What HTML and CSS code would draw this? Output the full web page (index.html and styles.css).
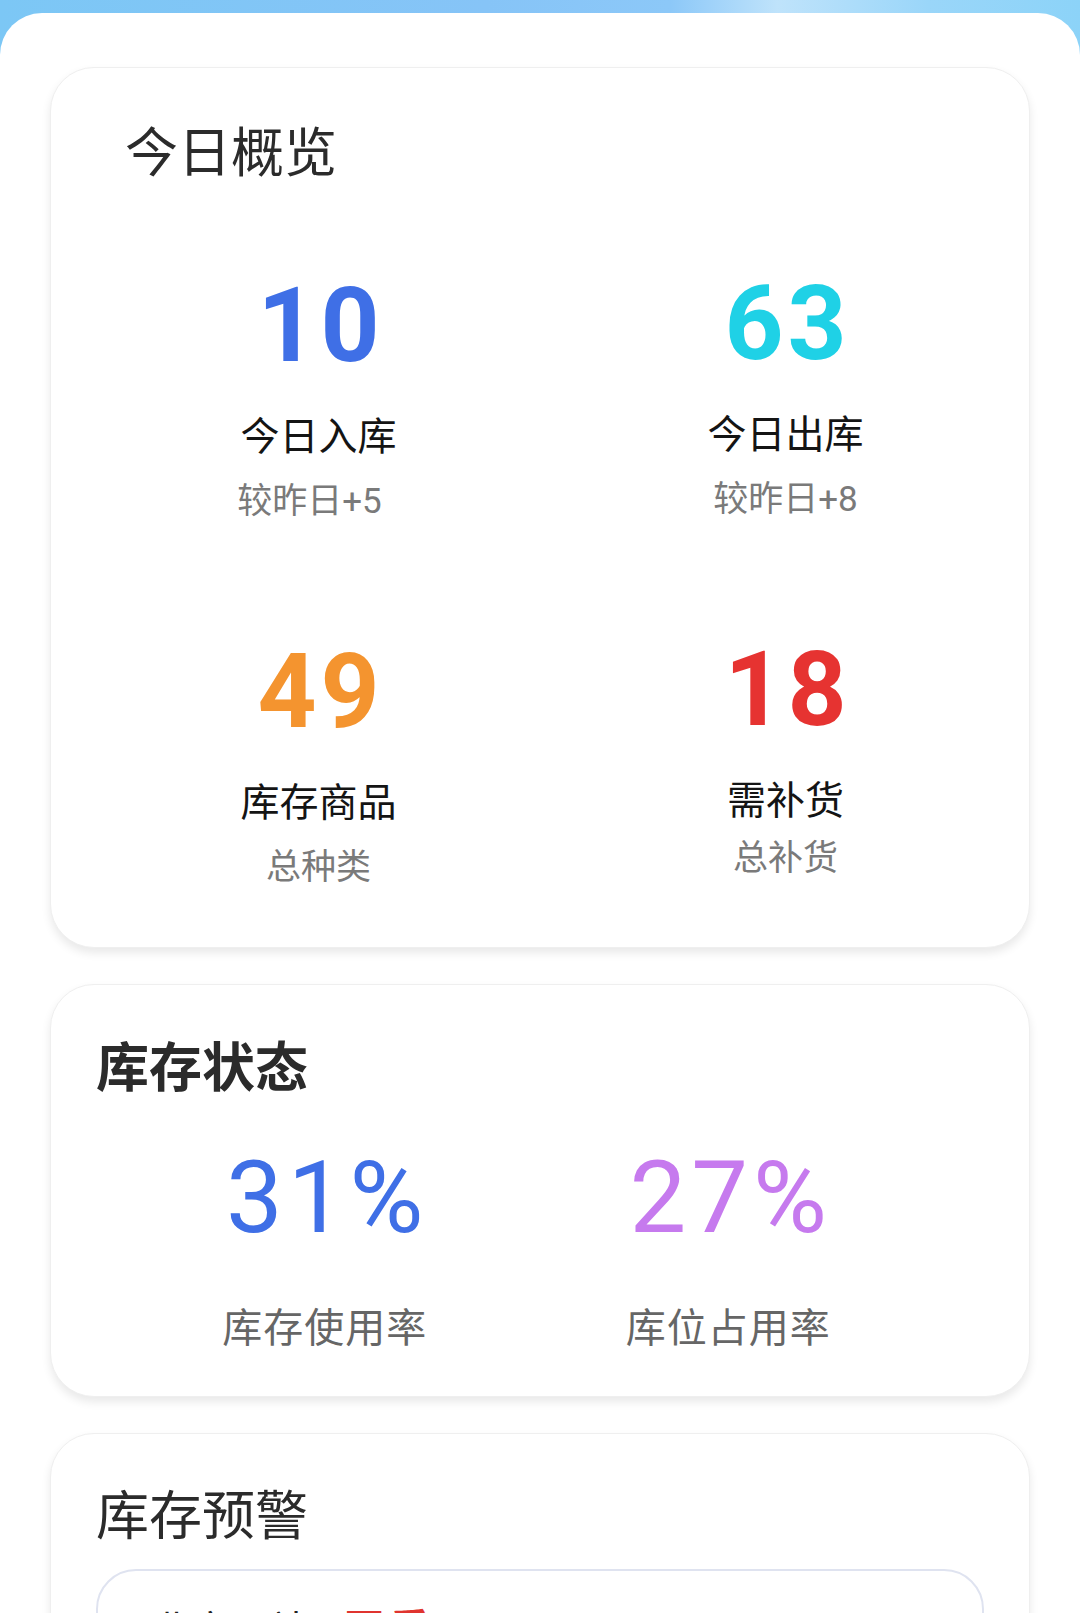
FILE: index.html
```html
<!DOCTYPE html>
<html lang="zh-CN">
<head>
<meta charset="utf-8">
<title>库存概览</title>
<link rel="stylesheet" href="styles.css">
</head>
<body>
<div class="panel">
  <section class="card overview">
    <h2 class="card-title light">今日概览</h2>
    <div class="stat-grid">
      <div class="stat">
        <div class="stat-num blue">10</div>
        <div class="stat-label">今日入库</div>
        <div class="stat-sub stat-sub-shift">较昨日+5</div>
      </div>
      <div class="stat stat-up">
        <div class="stat-num cyan">63</div>
        <div class="stat-label">今日出库</div>
        <div class="stat-sub">较昨日+8</div>
      </div>
      <div class="stat">
        <div class="stat-num orange">49</div>
        <div class="stat-label">库存商品</div>
        <div class="stat-sub">总种类</div>
      </div>
      <div class="stat stat-up stat-tight">
        <div class="stat-num red">18</div>
        <div class="stat-label">需补货</div>
        <div class="stat-sub">总补货</div>
      </div>
    </div>
  </section>

  <section class="card status">
    <h2 class="card-title bold">库存状态</h2>
    <div class="rate-grid">
      <div class="rate">
        <div class="rate-num blue">31%</div>
        <div class="rate-label">库存使用率</div>
      </div>
      <div class="rate">
        <div class="rate-num purple">27%</div>
        <div class="rate-label">库位占用率</div>
      </div>
    </div>
  </section>

  <section class="card warning">
    <h2 class="card-title light">库存预警</h2>
    <div class="alert">
      <div class="alert-row">
        <span class="alert-name">北京西站</span>
        <span class="alert-tag">严重</span>
      </div>
      <div class="alert-desc">库存不足，请及时补货</div>
    </div>
  </section>
</div>
</body>
</html>
```

FILE: styles.css
```css
* {
  box-sizing: border-box;
}

html, body {
  margin: 0;
  padding: 0;
}

body {
  width: 1080px;
  height: 1613px;
  overflow: hidden;
  font-family: "Noto Sans CJK SC", "Noto Sans", sans-serif;
  background: linear-gradient(90deg, #7cc7f5 0%, #86c4f7 45%, #8cc8f8 62%, #bfe3fb 72%, #9ad6f9 86%, #8cd3f8 100%);
}

.panel {
  margin-top: 13px;
  min-height: 1600px;
  background: #ffffff;
  border-radius: 42px 42px 0 0;
  padding: 54px 50px 0 50px;
  display: flex;
  flex-direction: column;
  gap: 36px;
}

.card {
  background: #ffffff;
  border: 1px solid #efefef;
  border-radius: 44px;
  box-shadow: 0 5px 10px rgba(0, 0, 0, 0.09);
}

.card-title {
  margin: 0;
  font-size: 53px;
  line-height: 1;
  color: #2b2b2b;
}

.card-title.light {
  font-weight: 400;
}

.card-title.bold {
  font-weight: 700;
}

/* ---------- Overview ---------- */
.overview {
  height: 881px;
  padding: 55px 10px 0 34px;
}

.overview .card-title {
  margin-left: 40px;
}

.stat-grid {
  margin-top: 98px;
  display: grid;
  grid-template-columns: 1fr 1fr;
  row-gap: 121px;
}

.stat {
  display: flex;
  flex-direction: column;
  align-items: center;
}

.stat-up {
  margin-top: -2px;
}

.stat-num {
  font-family: Roboto, "Liberation Sans", sans-serif;
  font-weight: 700;
  font-size: 103px;
  line-height: 1;
  letter-spacing: 4px;
  margin-right: -4px;
}

.stat-label {
  margin-top: 37px;
  font-size: 39px;
  line-height: 1;
  color: #141414;
}

.stat-sub {
  margin-top: 31px;
  font-family: Roboto, "Noto Sans CJK SC", sans-serif;
  font-size: 35px;
  line-height: 1;
  color: #7a7a7a;
}

.stat-sub-shift {
  margin-right: 18px;
}

.stat-tight .stat-sub {
  margin-top: 24px;
}

/* ---------- Status ---------- */
.status {
  height: 413px;
  padding: 53px 45px 0 45px;
}

.rate-grid {
  margin-top: 56px;
  padding: 0 54px 0 27px;
  display: grid;
  grid-template-columns: 1fr 1fr;
}

.rate {
  display: flex;
  flex-direction: column;
  align-items: center;
}

.rate-num {
  font-family: Roboto, "Liberation Sans", sans-serif;
  font-weight: 400;
  font-size: 101px;
  line-height: 1;
  letter-spacing: 5px;
  margin-right: -5px;
}

.rate-label {
  margin-top: 57px;
  font-size: 40px;
  line-height: 1;
  color: #666666;
  letter-spacing: 1px;
}

/* ---------- Warning ---------- */
.warning {
  padding: 52px 45px 40px 45px;
}

.alert {
  margin-top: 30px;
  border: 2px solid #dfe3f0;
  border-radius: 40px;
  padding: 35px 40px 40px 55px;
}

.alert-row {
  display: flex;
  align-items: center;
  gap: 34px;
}

.alert-name {
  font-size: 39px;
  line-height: 1;
  color: #222222;
}

.alert-tag {
  font-size: 42px;
  line-height: 1;
  font-weight: 700;
  color: #e0342f;
  letter-spacing: 4px;
}

.alert-desc {
  margin-top: 20px;
  font-size: 32px;
  color: #888888;
}

/* ---------- Colours ---------- */
.blue { color: #3f6fe6; }
.cyan { color: #1fd1e6; }
.orange { color: #f4942f; }
.red { color: #e63331; }
.purple { color: #c67aee; }
```
